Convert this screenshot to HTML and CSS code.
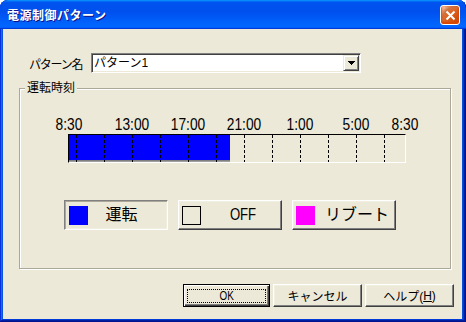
FILE: index.html
```html
<!DOCTYPE html>
<html lang="ja">
<head>
<meta charset="utf-8">
<title>電源制御パターン</title>
<link rel="stylesheet" href="styles.css">
</head>
<body>
<div class="window">
  <div class="titlebar">
    <span class="title">電源制御パターン</span>
    <button class="close" aria-label="閉じる">
      <svg width="11" height="11" viewBox="0 0 11 11"><path d="M1.5 1.5l8 8M9.5 1.5l-8 8" stroke="#fff" stroke-width="2" fill="none"/></svg>
    </button>
  </div>
  <div class="content">
    <div class="name-row">
      <label class="name-label">パターン名</label>
      <div class="combo">
        <span class="combo-text">パターン1</span>
        <span class="combo-btn"><svg width="7" height="4" viewBox="0 0 7 4"><path d="M0 0h7v1H0zM1 1h5v1H1zM2 2h3v1H2zM3 3h1v1H3z" fill="#000"/></svg></span>
      </div>
    </div>

    <fieldset class="group">
      <legend class="group-title">運転時刻</legend>
      <div class="timeline">
        <div class="ticks">
          <span class="tick" style="left:0%">8:30</span>
          <span class="tick" style="left:18.75%">13:00</span>
          <span class="tick" style="left:35.4167%">17:00</span>
          <span class="tick" style="left:52.0833%">21:00</span>
          <span class="tick" style="left:68.75%">1:00</span>
          <span class="tick" style="left:85.4167%">5:00</span>
          <span class="tick" style="left:100%">8:30</span>
        </div>
        <div class="bar">
          <div class="bar-fill" style="width:47.9167%"></div>
          <svg class="bar-grid" width="336" height="27" viewBox="0 0 336 27">
            <g stroke="#000" stroke-width="1" stroke-dasharray="3 2">
              <line x1="7.5" y1="0" x2="7.5" y2="27"/>
              <line x1="35.5" y1="0" x2="35.5" y2="27"/>
              <line x1="63.5" y1="0" x2="63.5" y2="27"/>
              <line x1="91.5" y1="0" x2="91.5" y2="27"/>
              <line x1="119.5" y1="0" x2="119.5" y2="27"/>
              <line x1="147.5" y1="0" x2="147.5" y2="27"/>
              <line x1="175.5" y1="0" x2="175.5" y2="27"/>
              <line x1="203.5" y1="0" x2="203.5" y2="27"/>
              <line x1="231.5" y1="0" x2="231.5" y2="27"/>
              <line x1="259.5" y1="0" x2="259.5" y2="27"/>
              <line x1="287.5" y1="0" x2="287.5" y2="27"/>
              <line x1="315.5" y1="0" x2="315.5" y2="27"/>
            </g>
          </svg>
        </div>
      </div>

      <div class="modes">
        <button class="mode is-pressed"><span class="swatch swatch--run"></span><span class="mode-label mode-label--run">運転</span></button>
        <button class="mode"><span class="swatch swatch--off"></span><span class="mode-label"><span class="narrow">OFF</span></span></button>
        <button class="mode"><span class="swatch swatch--reboot"></span><span class="mode-label">リブート</span></button>
      </div>
    </fieldset>

    <div class="actions">
      <button class="btn btn--ok btn--default"><span class="focus"><span class="narrow">OK</span></span></button>
      <button class="btn btn--wide">キャンセル</button>
      <button class="btn btn--wide">ヘルプ(<u>H</u>)</button>
    </div>
  </div>
</div>
</body>
</html>
```

FILE: styles.css
```css
html, body {
  margin: 0;
  padding: 0;
  background: #ffffff;
  width: 466px;
  height: 322px;
  overflow: hidden;
}

body {
  font-family: "Liberation Sans", "Noto Sans CJK JP", sans-serif;
  font-size: 12px;
  color: #000;
}

button {
  font-family: inherit;
  color: #000;
  margin: 0;
  padding: 0;
}

.window {
  width: 466px;
  height: 322px;
  box-sizing: border-box;
  display: flex;
  flex-direction: column;
  background: #0a4fdc;
  border-radius: 8px 8px 0 0;
  overflow: hidden;
  box-shadow: inset -1px -1px #00138c, inset 1px 1px #0831d9,
              inset -2px -2px #001ea0, inset 2px 2px #166aee,
              inset -3px -3px #003bda, inset 3px 3px #0855dd;
}

.titlebar {
  height: 29px;
  flex: none;
  display: flex;
  align-items: center;
  padding: 1px 6px 0 7px;
  box-sizing: border-box;
  border-radius: 8px 8px 0 0;
  background: linear-gradient(180deg, #0997ff, #0053ee 8%, #0050ee 40%, #0066ff 88%, #0066ff 93%, #005bff 95%, #003dd7 96%, #003dd7);
}

.title {
  font-family: "Noto Sans CJK JP", sans-serif;
  font-weight: bold;
  font-size: 12px;
  letter-spacing: 0.5px;
  color: #fff;
  text-shadow: 1px 1px #0f1089;
  line-height: 16px;
}

.close {
  margin-left: auto;
  width: 20px;
  height: 20px;
  box-sizing: border-box;
  border: 1px solid #fff;
  border-radius: 3px;
  display: flex;
  align-items: center;
  justify-content: center;
  background: radial-gradient(circle at 90% 90%, #cc4600 0, #dc6527 55%, #cd7546 70%, #ffccb2 90%, #fff 100%);
  box-shadow: inset 0 -1px 2px 1px #da4600;
}

.content {
  flex: 1;
  margin: 0 4px 3px 3px;
  background: #ece9d8;
  display: flex;
  flex-direction: column;
}

.name-row {
  margin-top: 24px;
  display: flex;
  align-items: center;
  padding-left: 26px;
}

.name-label {
  width: 62px;
  font-size: 12px;
  letter-spacing: -1.2px;
  white-space: nowrap;
}

.combo {
  width: 270px;
  height: 20px;
  box-sizing: border-box;
  border: 1px solid;
  border-color: #808080 #fff #fff #808080;
  box-shadow: inset 1px 1px #404040, inset -1px -1px #ece9d8;
  background: #fff;
  display: flex;
  align-items: center;
  padding: 1px 1px 1px 2px;
}

.combo-text {
  flex: 1;
  line-height: 16px;
}

.combo-btn {
  width: 16px;
  height: 16px;
  box-sizing: border-box;
  background: #ece9d8;
  border: 1px solid;
  border-color: #ece9d8 #404040 #404040 #ece9d8;
  box-shadow: inset 1px 1px #fff, inset -1px -1px #808080;
  display: flex;
  align-items: center;
  justify-content: center;
}

.group {
  margin: 8px 11px 0 16px;
  padding: 0 0 38px 0;
  border: 1px solid #aca899;
  box-shadow: inset 1px 1px #fff, 1px 1px #fff;
  min-width: 0;
}

.group-title {
  margin-left: 5px;
  padding: 0 2px;
  line-height: 15px;
  font-size: 12px;
  background: #ece9d8;
}

.timeline {
  margin: 21px 0 0 48px;
  width: 338px;
}

.ticks {
  position: relative;
  height: 16px;
  margin-left: 1px;
  width: 336px;
}

.tick {
  position: absolute;
  top: 0;
  font-size: 16px;
  line-height: 16px;
  white-space: nowrap;
  transform: translateX(-50%) scaleX(0.86);
}

.bar {
  margin-top: 1px;
  height: 29px;
  box-sizing: border-box;
  border-style: solid;
  border-width: 1px;
  border-color: #000 #fff #fff #000;
  position: relative;
}

.bar-fill {
  height: 100%;
  background: #0000ff;
  box-shadow: inset 0 -1px #a0a0a0, inset 0 -2px #808080;
}

.bar-grid {
  position: absolute;
  top: 0;
  left: 0;
  display: block;
}

.modes {
  margin: 37px 0 0 44px;
  display: flex;
  gap: 10px;
}

.mode {
  width: 104px;
  height: 30px;
  box-sizing: border-box;
  display: flex;
  align-items: center;
  padding: 0 0 0 3px;
  background: #ece9d8;
  border: 1px solid;
  border-color: #fff #404040 #404040 #fff;
  box-shadow: inset -1px -1px #808080, inset 1px 1px #f1efe2;
  font-size: 16px;
}

.mode.is-pressed {
  border-color: #808080 #fff #fff #808080;
  box-shadow: inset 1px 1px #aca899, inset -1px -1px #f1efe2;
  padding-left: 4px;
}

.swatch {
  width: 19px;
  height: 19px;
  box-sizing: border-box;
  flex: none;
}

.swatch--run { background: #0000ff; }
.swatch--off { border: 1px solid #000; }
.swatch--reboot { background: #ff00ff; }

.mode-label {
  flex: 1;
  text-align: center;
  margin-left: 4px;
  line-height: 20px;
}

.mode-label--run {
  padding-right: 16px;
}

.narrow {
  display: inline-block;
  transform: scaleX(0.82);
}

.actions {
  margin-top: 15px;
  display: flex;
  justify-content: flex-end;
  gap: 3px;
  padding-right: 8px;
}

.btn {
  width: 89px;
  height: 23px;
  box-sizing: border-box;
  background: #ece9d8;
  border: 1px solid;
  border-color: #fff #404040 #404040 #fff;
  box-shadow: inset -1px -1px #808080, inset 1px 1px #f1efe2;
  font-size: 12px;
  display: flex;
  align-items: center;
  justify-content: center;
}

.btn--ok {
  width: 87px;
}

.btn--default {
  border-color: #000;
  box-shadow: inset 1px 1px #fff, inset -1px -1px #404040, inset -2px -2px #808080;
  padding: 4px 3px 3px 3px;
  align-items: stretch;
}

.focus {
  flex: 1;
  border: 1px dotted #000;
  display: flex;
  align-items: center;
  justify-content: center;
}
```
